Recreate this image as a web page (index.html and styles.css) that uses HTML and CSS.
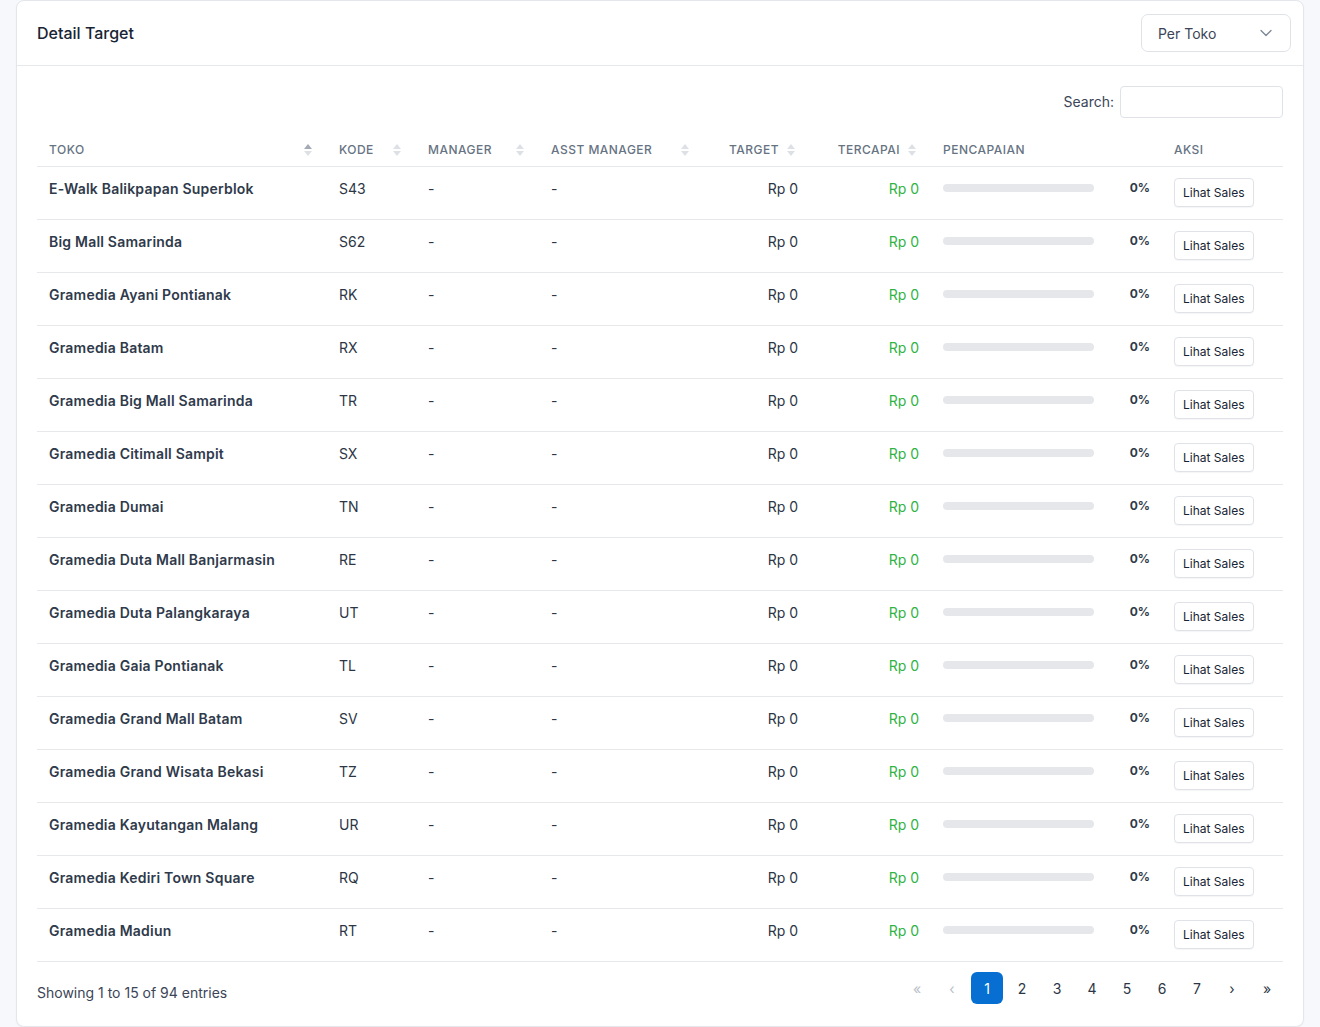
FILE: index.html
```html
<!DOCTYPE html>
<html lang="en">
<head>
    <meta charset="UTF-8">
    <meta name="viewport" content="width=device-width, initial-scale=1.0">
    <title>Detail Target</title>
    <link rel="stylesheet" href="styles.css">
</head>
<body>
    <div class="page">
        <div class="card">
            <div class="card-header">
                <h3 class="card-title">Detail Target</h3>
                <div class="select">
                    <span>Per Toko</span>
                    <svg width="12" height="8" viewBox="0 0 12 8" fill="none" stroke="currentColor" stroke-width="1.3" stroke-linecap="round" stroke-linejoin="round"><path d="M1 1.5l5 5 5-5"/></svg>
                </div>
            </div>
            <div class="card-body">
                <div class="table-search">
                    <label for="search">Search:</label>
                    <input id="search" type="search">
                </div>
                <table class="table">
                    <colgroup>
                        <col style="width:290px">
                        <col style="width:89px">
                        <col style="width:123px">
                        <col style="width:165px">
                        <col style="width:106px">
                        <col style="width:121px">
                        <col style="width:231px">
                        <col style="width:121px">
                    </colgroup>
                    <thead>
                        <tr>
                            <th><div class="th-inner"><span>Toko</span><span class="sort asc"></span></div></th>
                            <th><div class="th-inner"><span>Kode</span><span class="sort"></span></div></th>
                            <th><div class="th-inner"><span>Manager</span><span class="sort"></span></div></th>
                            <th><div class="th-inner"><span>Asst Manager</span><span class="sort"></span></div></th>
                            <th class="num"><div class="th-inner"><span>Target</span><span class="sort"></span></div></th>
                            <th class="num"><div class="th-inner"><span>Tercapai</span><span class="sort"></span></div></th>
                            <th>Pencapaian</th>
                            <th>Aksi</th>
                        </tr>
                    </thead>
                    <tbody>
                        <tr><td class="store">E-Walk Balikpapan Superblok</td><td>S43</td><td>-</td><td>-</td><td class="num">Rp 0</td><td class="num green">Rp 0</td><td><div class="progress-cell"><div class="progress"></div><span class="pct">0%</span></div></td><td><button class="btn">Lihat Sales</button></td></tr>
                        <tr><td class="store">Big Mall Samarinda</td><td>S62</td><td>-</td><td>-</td><td class="num">Rp 0</td><td class="num green">Rp 0</td><td><div class="progress-cell"><div class="progress"></div><span class="pct">0%</span></div></td><td><button class="btn">Lihat Sales</button></td></tr>
                        <tr><td class="store">Gramedia Ayani Pontianak</td><td>RK</td><td>-</td><td>-</td><td class="num">Rp 0</td><td class="num green">Rp 0</td><td><div class="progress-cell"><div class="progress"></div><span class="pct">0%</span></div></td><td><button class="btn">Lihat Sales</button></td></tr>
                        <tr><td class="store">Gramedia Batam</td><td>RX</td><td>-</td><td>-</td><td class="num">Rp 0</td><td class="num green">Rp 0</td><td><div class="progress-cell"><div class="progress"></div><span class="pct">0%</span></div></td><td><button class="btn">Lihat Sales</button></td></tr>
                        <tr><td class="store">Gramedia Big Mall Samarinda</td><td>TR</td><td>-</td><td>-</td><td class="num">Rp 0</td><td class="num green">Rp 0</td><td><div class="progress-cell"><div class="progress"></div><span class="pct">0%</span></div></td><td><button class="btn">Lihat Sales</button></td></tr>
                        <tr><td class="store">Gramedia Citimall Sampit</td><td>SX</td><td>-</td><td>-</td><td class="num">Rp 0</td><td class="num green">Rp 0</td><td><div class="progress-cell"><div class="progress"></div><span class="pct">0%</span></div></td><td><button class="btn">Lihat Sales</button></td></tr>
                        <tr><td class="store">Gramedia Dumai</td><td>TN</td><td>-</td><td>-</td><td class="num">Rp 0</td><td class="num green">Rp 0</td><td><div class="progress-cell"><div class="progress"></div><span class="pct">0%</span></div></td><td><button class="btn">Lihat Sales</button></td></tr>
                        <tr><td class="store">Gramedia Duta Mall Banjarmasin</td><td>RE</td><td>-</td><td>-</td><td class="num">Rp 0</td><td class="num green">Rp 0</td><td><div class="progress-cell"><div class="progress"></div><span class="pct">0%</span></div></td><td><button class="btn">Lihat Sales</button></td></tr>
                        <tr><td class="store">Gramedia Duta Palangkaraya</td><td>UT</td><td>-</td><td>-</td><td class="num">Rp 0</td><td class="num green">Rp 0</td><td><div class="progress-cell"><div class="progress"></div><span class="pct">0%</span></div></td><td><button class="btn">Lihat Sales</button></td></tr>
                        <tr><td class="store">Gramedia Gaia Pontianak</td><td>TL</td><td>-</td><td>-</td><td class="num">Rp 0</td><td class="num green">Rp 0</td><td><div class="progress-cell"><div class="progress"></div><span class="pct">0%</span></div></td><td><button class="btn">Lihat Sales</button></td></tr>
                        <tr><td class="store">Gramedia Grand Mall Batam</td><td>SV</td><td>-</td><td>-</td><td class="num">Rp 0</td><td class="num green">Rp 0</td><td><div class="progress-cell"><div class="progress"></div><span class="pct">0%</span></div></td><td><button class="btn">Lihat Sales</button></td></tr>
                        <tr><td class="store">Gramedia Grand Wisata Bekasi</td><td>TZ</td><td>-</td><td>-</td><td class="num">Rp 0</td><td class="num green">Rp 0</td><td><div class="progress-cell"><div class="progress"></div><span class="pct">0%</span></div></td><td><button class="btn">Lihat Sales</button></td></tr>
                        <tr><td class="store">Gramedia Kayutangan Malang</td><td>UR</td><td>-</td><td>-</td><td class="num">Rp 0</td><td class="num green">Rp 0</td><td><div class="progress-cell"><div class="progress"></div><span class="pct">0%</span></div></td><td><button class="btn">Lihat Sales</button></td></tr>
                        <tr><td class="store">Gramedia Kediri Town Square</td><td>RQ</td><td>-</td><td>-</td><td class="num">Rp 0</td><td class="num green">Rp 0</td><td><div class="progress-cell"><div class="progress"></div><span class="pct">0%</span></div></td><td><button class="btn">Lihat Sales</button></td></tr>
                        <tr><td class="store">Gramedia Madiun</td><td>RT</td><td>-</td><td>-</td><td class="num">Rp 0</td><td class="num green">Rp 0</td><td><div class="progress-cell"><div class="progress"></div><span class="pct">0%</span></div></td><td><button class="btn">Lihat Sales</button></td></tr>
                    </tbody>
                </table>
                <div class="table-footer">
                    <div class="table-info">Showing 1 to 15 of 94 entries</div>
                    <ul class="pagination">
                        <li class="page-item disabled">&laquo;</li>
                        <li class="page-item disabled">&lsaquo;</li>
                        <li class="page-item active">1</li>
                        <li class="page-item">2</li>
                        <li class="page-item">3</li>
                        <li class="page-item">4</li>
                        <li class="page-item">5</li>
                        <li class="page-item">6</li>
                        <li class="page-item">7</li>
                        <li class="page-item">&rsaquo;</li>
                        <li class="page-item">&raquo;</li>
                    </ul>
                </div>
            </div>
        </div>
    </div>
</body>
</html>
```

FILE: styles.css
```css
body, html {
    margin: 0;
    padding: 0;
    background-color: #f6f8fb;
    font-family: 'Inter', 'Noto Sans', sans-serif;
    color: #182433;
    font-size: 14px;
}
.page {
    padding: 0 16px;
}
.card {
    background: #ffffff;
    border: 1px solid #e3e6ea;
    border-radius: 8px;
    box-shadow: 0 1px 2px rgba(24, 36, 51, 0.04);
}
.card-header {
    height: 64px;
    display: flex;
    align-items: center;
    justify-content: space-between;
    padding: 0 12px 0 20px;
    border-bottom: 1px solid #e6e8eb;
}
.card-title {
    margin: 0;
    font-size: 16px;
    font-weight: 500;
    color: #182433;
}
.select {
    width: 150px;
    height: 38px;
    box-sizing: border-box;
    border: 1px solid #dfe3e8;
    border-radius: 7px;
    display: flex;
    align-items: center;
    justify-content: space-between;
    padding: 0 18px 0 16px;
    font-size: 14px;
    color: #3b4557;
}
.select svg {
    color: #7b8594;
}
.card-body {
    padding: 20px 20px 22px;
}
.table-search {
    display: flex;
    justify-content: flex-end;
    align-items: center;
    gap: 6px;
    font-size: 14px;
    color: #3b4557;
}
.table-search label {
    margin-top: -2px;
}
.table-search input {
    width: 163px;
    height: 32px;
    box-sizing: border-box;
    border: 1px solid #dfe3e8;
    border-radius: 4px;
    margin: 0;
    outline: none;
}
.table {
    width: 100%;
    table-layout: fixed;
    border-collapse: collapse;
    margin-top: 14px;
}
.table th {
    padding: 10px 12px 8px;
    font-size: 12px;
    font-weight: 500;
    line-height: 16px;
    letter-spacing: 0.04em;
    text-transform: uppercase;
    color: #667382;
    text-align: left;
    border-bottom: 1px solid #e6e8eb;
}
.th-inner {
    display: flex;
    align-items: center;
    justify-content: space-between;
}
.table th.num .th-inner {
    justify-content: flex-end;
    gap: 8px;
}
.sort {
    display: inline-flex;
    flex-direction: column;
    gap: 2px;
    margin-right: 3px;
}
.sort::before,
.sort::after {
    content: '';
    display: block;
    width: 0;
    height: 0;
    border-left: 4px solid transparent;
    border-right: 4px solid transparent;
}
.sort::before {
    border-bottom: 5px solid #dde1e6;
}
.sort::after {
    border-top: 5px solid #dde1e6;
}
.sort.asc::before {
    border-bottom-color: #a3aab5;
}
.table td {
    padding: 12px;
    height: 28px;
    line-height: 20px;
    vertical-align: top;
    border-bottom: 1px solid #e6e8eb;
    color: #2c3645;
    white-space: nowrap;
}
.table td.store {
    font-weight: 600;
    letter-spacing: 0.015em;
    color: #2f3a4b;
}
.table td.num {
    text-align: right;
}
.table td.green {
    color: #2fb344;
}
.progress-cell {
    display: flex;
    align-items: flex-start;
}
.progress {
    width: 151px;
    height: 8px;
    margin-top: 5px;
    background: #e5e7eb;
    border-radius: 4px;
}
.pct {
    flex: 1;
    padding-top: 1px;
    text-align: right;
    font-size: 12px;
    font-weight: 700;
    line-height: 16px;
    color: #2f3a4b;
}
.btn {
    height: 29px;
    margin-top: -1px;
    padding: 0 8px;
    font-family: inherit;
    font-size: 12px;
    color: #182433;
    background: #ffffff;
    border: 1px solid #dfe3e8;
    border-radius: 4px;
    box-shadow: 0 1px 1px rgba(24, 36, 51, 0.04);
}
.table-footer {
    display: flex;
    justify-content: space-between;
    align-items: flex-start;
    margin-top: 10px;
}
.table-info {
    padding-top: 12px;
    font-size: 14px;
    line-height: 17px;
    color: #3b4557;
}
.pagination {
    list-style: none;
    margin: 0;
    padding: 0;
    display: flex;
    gap: 3px;
}
.page-item {
    width: 32px;
    height: 32px;
    display: flex;
    align-items: center;
    justify-content: center;
    border-radius: 6px;
    font-size: 14px;
    color: #2c3645;
}
.page-item.disabled {
    color: #b8bec7;
}
.page-item.active {
    background: #066fd1;
    color: #ffffff;
}
```
